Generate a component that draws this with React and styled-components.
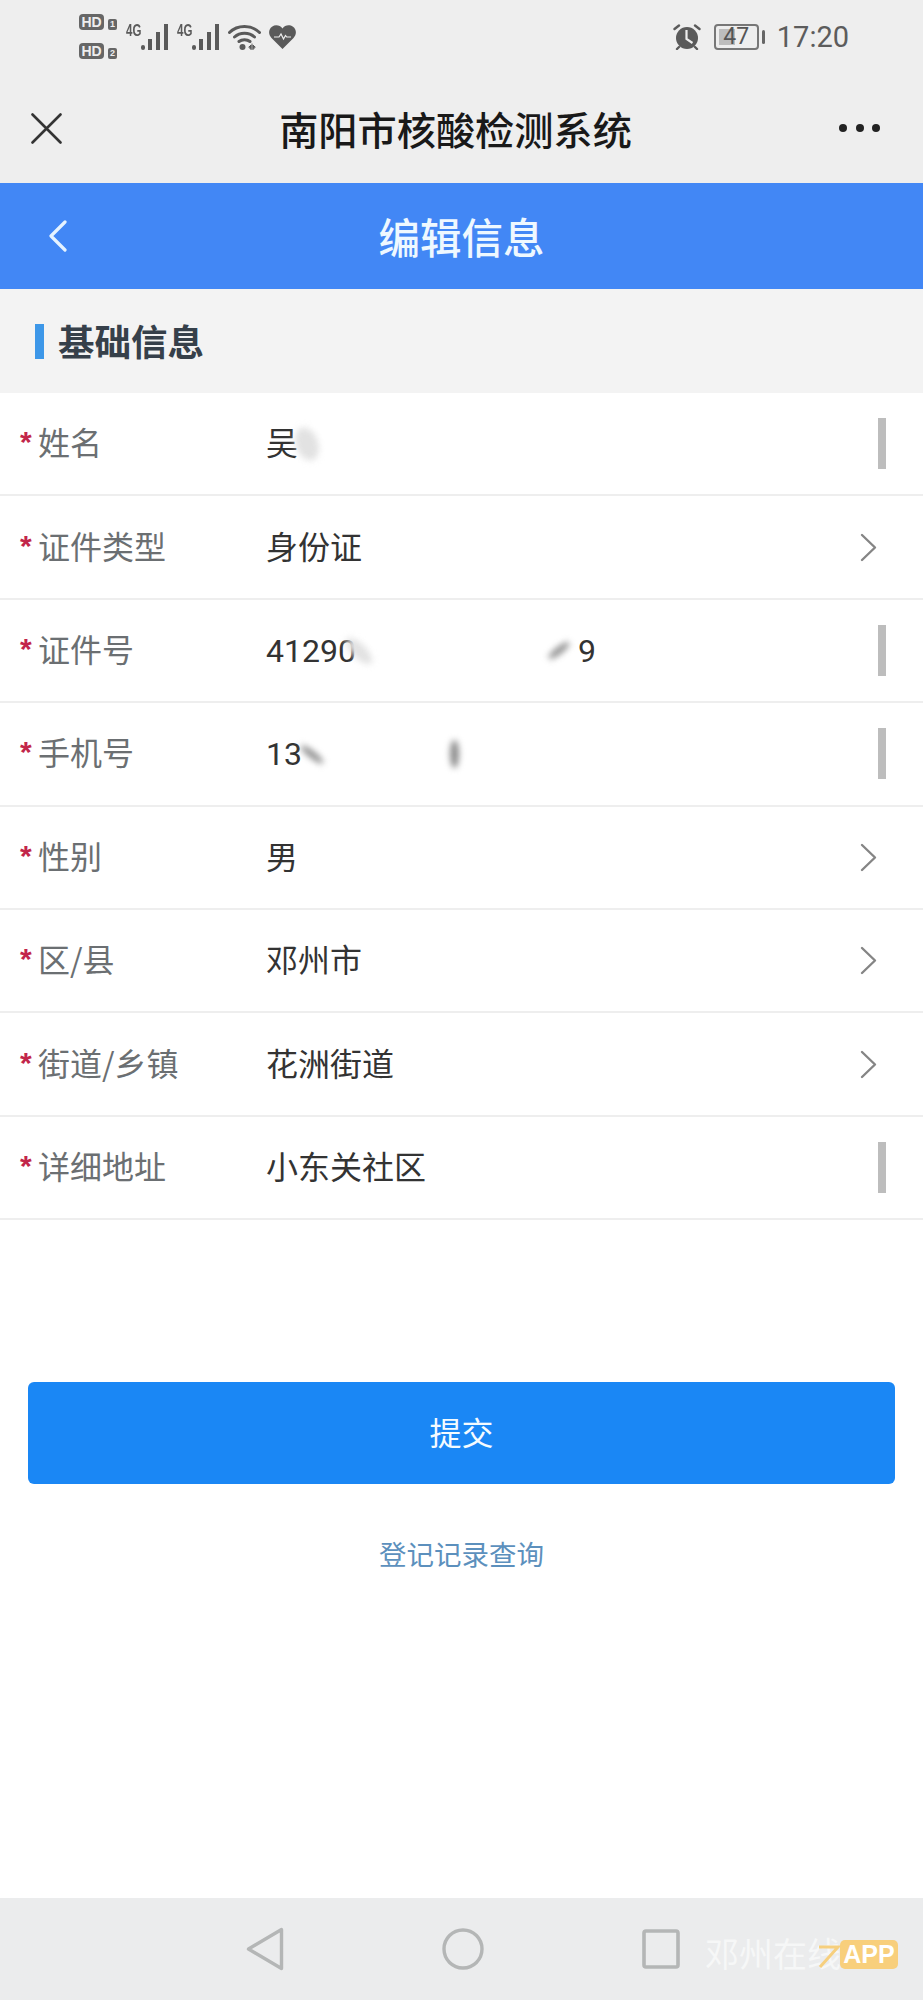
import React from "react";
import styled, { createGlobalStyle } from "styled-components";

const getFields = () => [
  { label: "姓名", value: <>吴<Smudge $w={34} $h={22} $shift={-8} $angle={70} /></>, end: "bar" },
  { label: "证件类型", value: "身份证", end: "arrow" },
  {
    label: "证件号",
    value: (
      <>
        41290
        <Smudge $w={34} $h={14} $shift={-14} $angle={45} />
        <Smudge $w={26} $h={7} $shift={170} $angle={-38} $dark />
        <Digit>9</Digit>
      </>
    ),
    end: "bar"
  },
  {
    label: "手机号",
    value: (
      <>
        13
        <Smudge $w={28} $h={7} $shift={-4} $angle={38} $dark />
        <Smudge $w={9} $h={28} $shift={124} $angle={0} $dark />
      </>
    ),
    end: "bar"
  },
  { label: "性别", value: "男", end: "arrow" },
  { label: "区/县", value: "邓州市", end: "arrow" },
  { label: "街道/乡镇", value: "花洲街道", end: "arrow" },
  { label: "详细地址", value: "小东关社区", end: "bar" }
];

const Signal = () => (
  <svg width="28" height="26" viewBox="0 0 28 26" fill="#5a5a5a">
    <rect x="0" y="21" width="4" height="5" rx="2" />
    <rect x="7" y="15" width="4" height="11" />
    <rect x="15" y="8" width="4" height="18" />
    <rect x="23" y="0" width="4" height="26" />
  </svg>
);

const Wifi = () => (
  <svg width="33" height="26" viewBox="0 0 33 26" fill="none" stroke="#5a5a5a" strokeWidth="3" strokeLinecap="round">
    <path d="M1.5 8.500C9.500 .5 23.500 .5 31.500 8.500M6.500 13c5.500-5 14.500-5 20 0M11 17.500c3-2.500 8-2.500 11 0" />
    <circle cx="14.500" cy="23" r="3" fill="#5a5a5a" stroke="none" />
    <path d="M24 20v6M21 23l2-2v4zM27 23l-2-2v4z" fill="#5a5a5a" strokeWidth="1" />
  </svg>
);

const Heart = () => (
  <svg width="27" height="24" viewBox="0 0 27 24">
    <path fill="#5a5a5a" d="M13.500 24 2.500 13C-1 9.500-.5 4 3 1.700 6.500-.7 11 .2 13.500 3.500 16-.2 20.500-.7 24 1.700c3.500 2.300 4 7.800.5 11.300z" />
    <path fill="none" stroke="#eee" strokeWidth="1.200" d="M5 12h5l2-3 2.500 5 2-3.500 1.200 1.500H22" />
  </svg>
);

const Alarm = () => (
  <svg width="28" height="26" viewBox="0 0 28 26">
    <circle cx="14" cy="14" r="11" fill="#5a5a5a" />
    <path fill="none" stroke="#5a5a5a" strokeWidth="2.400" strokeLinecap="round" d="M1.500 5 6 1.500M26.500 5 22 1.500M6 23l-2 2M22 23l2 2" />
    <path fill="none" stroke="#eee" strokeWidth="2.200" d="M13.500 6v9l6 4" />
  </svg>
);

const Arrow = () => (
  <ArrowSlot>
    <svg width="17" height="29" viewBox="0 0 17 29" fill="none" stroke="#858585" strokeWidth="2.400" strokeLinecap="round" strokeLinejoin="round">
      <path d="M2 2 15 14.500 2 27" />
    </svg>
  </ArrowSlot>
);

const App = () => (
  <Page>
    <GlobalStyle />
    <StatusBar>
      <StatusGroup>
        <SimStack>
          <SimLine><HdBadge>HD</HdBadge><SimNumber>1</SimNumber></SimLine>
          <SimLine><HdBadge>HD</HdBadge><SimNumber>2</SimNumber></SimLine>
        </SimStack>
        <Network><NetLabel>4G</NetLabel><Signal /></Network>
        <Network><NetLabel>4G</NetLabel><Signal /></Network>
        <Wifi />
        <Heart />
      </StatusGroup>
      <StatusGroup>
        <Alarm />
        <Battery>
          <BatteryLevel />
          <BatteryText>47</BatteryText>
        </Battery>
        <BatteryNub />
        <Clock>17:20</Clock>
      </StatusGroup>
    </StatusBar>

    <WechatBar>
      <svg width="31" height="31" viewBox="0 0 31 31" fill="none" stroke="#333" strokeWidth="2.600" strokeLinecap="round">
        <path d="M1.500 1.500 29.500 29.500M29.500 1.500 1.500 29.500" />
      </svg>
      <WechatTitle>南阳市核酸检测系统</WechatTitle>
      <Dots><Dot /><Dot /><Dot /></Dots>
    </WechatBar>

    <Header>
      <svg width="18" height="32" viewBox="0 0 18 32" fill="none" stroke="#e6f3ff" strokeWidth="3.200" strokeLinecap="round" strokeLinejoin="round">
        <path d="M16 2 2 16l14 14" />
      </svg>
      <HeaderTitle>编辑信息</HeaderTitle>
    </Header>

    <Section>
      <SectionMark />
      <SectionTitle>基础信息</SectionTitle>
    </Section>

    <Form>
      {getFields().map(({ label, value, end }) => (
        <Row key={label}>
          <Label><Star>*</Star>{label}</Label>
          <Value>{value}</Value>
          {end === "bar" ? <Cursor /> : <Arrow />}
        </Row>
      ))}
    </Form>

    <Actions>
      <Submit type="button">提交</Submit>
      <RecordLink>登记记录查询</RecordLink>
    </Actions>

    <NavBar>
      <NavIcons>
        <svg width="38" height="44" viewBox="0 0 38 44" fill="none" stroke="#b4b6b6" strokeWidth="3.400" strokeLinejoin="round">
          <path d="M35.500 2.500v39L2.500 22z" />
        </svg>
        <svg width="42" height="42" viewBox="0 0 42 42" fill="none" stroke="#b4b6b6" strokeWidth="3.400">
          <circle cx="21" cy="21" r="19" />
        </svg>
        <svg width="38" height="40" viewBox="0 0 38 40" fill="none" stroke="#b4b6b6" strokeWidth="3.600" strokeLinejoin="round">
          <rect x="2" y="2" width="34" height="36" rx="2" />
        </svg>
      </NavIcons>
      <Watermark>
        <WatermarkText>邓州在线</WatermarkText>
        <Bolt viewBox="0 0 22 24" fill="none" stroke="#f6cf7e" strokeWidth="3">
          <path d="M1 3h19L2 23" />
        </Bolt>
        <AppBadge>APP</AppBadge>
      </Watermark>
    </NavBar>
  </Page>
);

export default App;

const GlobalStyle = createGlobalStyle`
  html, body {
    margin: 0;
    padding: 0;
    background: #fff;
  }
  body {
    font-family: "Noto Sans CJK SC", "Noto Sans", sans-serif;
  }
`;

const Page = styled.div`
  width: 923px;
  height: 2000px;
  display: flex;
  flex-direction: column;
  overflow: hidden;
  background: #fff;
`;

const StatusBar = styled.div`
  height: 73px;
  flex: none;
  display: flex;
  align-items: center;
  justify-content: space-between;
  padding: 0 74px 0 79px;
  background: #eeeeee;
`;

const StatusGroup = styled.div`
  display: flex;
  align-items: center;
  gap: 8px;
`;

const SimStack = styled.div`
  display: flex;
  flex-direction: column;
  gap: 13px;
  margin-right: 1px;
`;

const SimLine = styled.div`
  display: flex;
  align-items: flex-end;
  gap: 4px;
  height: 16px;
`;

const HdBadge = styled.span`
  width: 25px;
  height: 16px;
  border-radius: 4px;
  background: #666;
  color: #eee;
  font: 700 14px/16px "Liberation Sans", sans-serif;
  text-align: center;
`;

const SimNumber = styled.span`
  width: 9px;
  height: 11px;
  border-radius: 2px;
  background: #666;
  color: #eee;
  font: 700 9px/11px "Liberation Sans", sans-serif;
  text-align: center;
`;

const Network = styled.div`
  position: relative;
  display: flex;
  align-items: flex-end;
  height: 26px;
  padding-left: 15px;
`;

const NetLabel = styled.span`
  position: absolute;
  left: 0;
  top: -1px;
  color: #5a5a5a;
  font: 700 16px/15px "Liberation Sans", sans-serif;
  transform: scaleX(0.72);
  transform-origin: left top;
`;

const Battery = styled.div`
  position: relative;
  width: 45px;
  height: 26px;
  margin-left: 5px;
  box-sizing: border-box;
  border: 2px solid #777;
  border-radius: 4px;
  display: flex;
  align-items: center;
  justify-content: center;
`;

const BatteryLevel = styled.div`
  position: absolute;
  left: 3px;
  top: 3px;
  bottom: 3px;
  width: 16px;
  background: #bdbdbd;
`;

const BatteryText = styled.span`
  position: relative;
  color: #555;
  font: 400 23px/22px "Roboto", sans-serif;
`;

const BatteryNub = styled.div`
  width: 3px;
  height: 14px;
  margin-left: -5px;
  border-radius: 2px;
  background: #666;
`;

const Clock = styled.span`
  margin-left: 4px;
  color: #5c5c5c;
  font: 400 29px/32px "Roboto", sans-serif;
`;

const WechatBar = styled.div`
  height: 110px;
  flex: none;
  display: grid;
  grid-template-columns: 1fr auto 1fr;
  align-items: center;
  padding: 0 43px 0 31px;
  background: #eeeeee;
`;

const WechatTitle = styled.div`
  color: #191919;
  font-size: 39.2px;
  line-height: 50px;
  font-weight: 500;
`;

const Dots = styled.div`
  justify-self: end;
  display: flex;
  gap: 8.5px;
`;

const Dot = styled.span`
  width: 8px;
  height: 8px;
  border-radius: 50%;
  background: #222;
`;

const Header = styled.div`
  height: 106px;
  flex: none;
  position: relative;
  display: flex;
  align-items: center;
  justify-content: center;
  padding: 0 49px;
  background: #4287f5;

  svg {
    position: absolute;
    left: 49px;
  }
`;

const HeaderTitle = styled.div`
  color: #eef8ff;
  font-size: 41.5px;
  line-height: 54px;
  font-weight: 500;
`;

const Section = styled.div`
  height: 104px;
  flex: none;
  display: flex;
  align-items: center;
  gap: 14px;
  padding-left: 35px;
  background: #f3f3f3;
`;

const SectionMark = styled.div`
  width: 9px;
  height: 35px;
  background: #3d97e8;
`;

const SectionTitle = styled.div`
  color: #36404a;
  font-size: 36.5px;
  line-height: 48px;
  font-weight: 700;
`;

const Form = styled.div`
  flex: none;
  background: #fff;
`;

const Row = styled.div`
  height: 103.4px;
  box-sizing: border-box;
  display: flex;
  align-items: center;
  padding: 0 37px 0 20px;
  border-bottom: 2px solid #eeeeee;
`;

const Label = styled.div`
  width: 246px;
  flex: none;
  display: flex;
  align-items: center;
  color: #6b6f72;
  font-size: 32px;
  line-height: 44px;
  margin-top: -5px;
`;

const Star = styled.span`
  width: 18px;
  height: 30px;
  margin-top: -4px;
  color: #c2264a;
  font: 700 30px/36px "Liberation Sans", sans-serif;
`;

const Value = styled.div`
  flex: 1;
  display: flex;
  align-items: center;
  color: #333;
  font-family: "Roboto", "Noto Sans CJK SC", sans-serif;
  font-size: 32px;
  line-height: 44px;
  margin-top: 1px;
`;

const Smudge = styled.span`
  flex: none;
  width: ${({ $w }) => $w}px;
  height: ${({ $h }) => $h}px;
  margin-left: ${({ $shift }) => $shift}px;
  background: ${({ $dark }) => ($dark ? "#8c8c8c" : "#e2e2e2")};
  border-radius: 50%;
  filter: blur(3px);
  transform: rotate(${({ $angle }) => $angle}deg);
`;

const Digit = styled.span`
  margin-left: 6px;
`;

const Cursor = styled.div`
  width: 8px;
  height: 51px;
  background: #bdbdbd;
`;

const ArrowSlot = styled.div`
  margin-right: 9px;
  display: flex;
`;

const Actions = styled.div`
  flex: none;
  display: flex;
  flex-direction: column;
  align-items: center;
  padding: 162px 28px 0 28px;
`;

const Submit = styled.button`
  width: 100%;
  height: 102px;
  padding: 0 0 5px;
  border: 0;
  border-radius: 6px;
  background: #1a87f5;
  color: #f4fbff;
  font-family: inherit;
  font-size: 32px;
`;

const RecordLink = styled.div`
  margin-top: 50px;
  color: #5c90bd;
  font-size: 27.5px;
  line-height: 38px;
`;

const NavBar = styled.div`
  height: 102px;
  flex: none;
  margin-top: auto;
  position: relative;
  display: flex;
  align-items: center;
  padding-left: 246px;
  background: #ebeced;
`;

const NavIcons = styled.div`
  display: flex;
  align-items: center;
  gap: 158px;
`;

const Watermark = styled.div`
  position: absolute;
  left: 705px;
  top: 34px;
  display: flex;
  align-items: center;
`;

const WatermarkText = styled.span`
  width: 135px;
  color: #f6f7f7;
  font-size: 34px;
  line-height: 42px;
  white-space: nowrap;
`;

const Bolt = styled.svg`
  width: 22px;
  height: 24px;
  margin: 6px 0 0 -22px;
`;

const AppBadge = styled.span`
  width: 58px;
  height: 29px;
  margin-top: 2px;
  border-radius: 5px;
  background: #f8cf7c;
  color: #fff;
  font: 700 25px/29px "Liberation Sans", sans-serif;
  text-align: center;
`;
